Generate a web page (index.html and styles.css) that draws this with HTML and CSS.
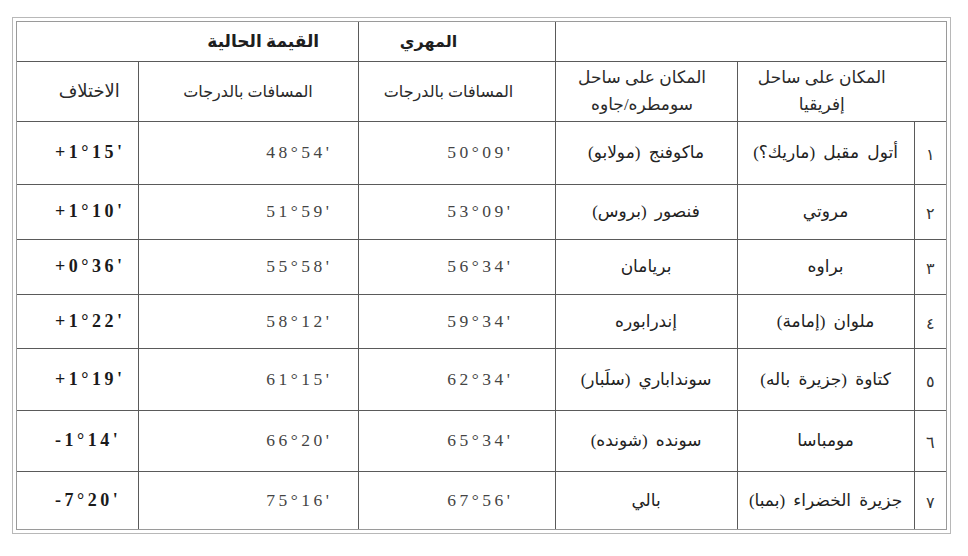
FILE: index.html
```html
<!DOCTYPE html>
<html lang="ar">
<head>
<meta charset="utf-8">
<title>جدول المسافات</title>
<link rel="stylesheet" href="styles.css">
</head>
<body>
<div class="frame">
  <div class="inner">
    <table class="grid" dir="rtl">
      <colgroup>
        <col class="c-num"><col class="c-af"><col class="c-su"><col class="c-mh"><col class="c-cur"><col class="c-diff">
      </colgroup>
      <thead>
        <tr class="h1">
          <th colspan="3"></th>
          <th class="title mahri">المهري</th>
          <th colspan="2" class="title current">القيمة الحالية</th>
        </tr>
        <tr class="h2">
          <th colspan="2" class="head two af-h">المكان على ساحل<br>إفريقيا</th>
          <th class="head two su-h">المكان على ساحل<br>سومطره/جاوه</th>
          <th class="head mh-h">المسافات بالدرجات</th>
          <th class="head cur-h">المسافات بالدرجات</th>
          <th class="head diff-h">الاختلاف</th>
        </tr>
      </thead>
      <tbody>
        <tr>
          <td class="no">١</td>
          <td class="place">أتول مقبل (ماريك؟)</td>
          <td class="place">ماكوفنج (مولابو)</td>
          <td class="deg mh">50°09'</td>
          <td class="deg cur">48°54'</td>
          <td class="diff">+1°15'</td>
        </tr>
        <tr>
          <td class="no">٢</td>
          <td class="place">مروتي</td>
          <td class="place">فنصور (بروس)</td>
          <td class="deg mh">53°09'</td>
          <td class="deg cur">51°59'</td>
          <td class="diff">+1°10'</td>
        </tr>
        <tr>
          <td class="no">٣</td>
          <td class="place">براوه</td>
          <td class="place">بريامان</td>
          <td class="deg mh">56°34'</td>
          <td class="deg cur">55°58'</td>
          <td class="diff">+0°36'</td>
        </tr>
        <tr>
          <td class="no">٤</td>
          <td class="place">ملوان (إمامة)</td>
          <td class="place">إندرابوره</td>
          <td class="deg mh">59°34'</td>
          <td class="deg cur">58°12'</td>
          <td class="diff">+1°22'</td>
        </tr>
        <tr>
          <td class="no">٥</td>
          <td class="place">كتاوة (جزيرة باله)</td>
          <td class="place">سونداباري (سلَبار)</td>
          <td class="deg mh">62°34'</td>
          <td class="deg cur">61°15'</td>
          <td class="diff">+1°19'</td>
        </tr>
        <tr>
          <td class="no">٦</td>
          <td class="place">مومباسا</td>
          <td class="place">سونده (شونده)</td>
          <td class="deg mh">65°34'</td>
          <td class="deg cur">66°20'</td>
          <td class="diff">-1°14'</td>
        </tr>
        <tr>
          <td class="no">٧</td>
          <td class="place">جزيرة الخضراء (بمبا)</td>
          <td class="place">بالي</td>
          <td class="deg mh">67°56'</td>
          <td class="deg cur">75°16'</td>
          <td class="diff">-7°20'</td>
        </tr>
      </tbody>
    </table>
  </div>
</div>
</body>
</html>
```

FILE: styles.css
```css
html, body {
  margin: 0;
  padding: 0;
  background: #ffffff;
}

body {
  font-family: "Liberation Serif", "DejaVu Sans", serif;
  color: #222;
}

.frame {
  margin: 17px 0 0 12px;
  width: fit-content;
  border: 1px solid #b8b8b8;
  padding: 3px;
}

.inner {
  border: 1px solid #9a9a9a;
}

.grid {
  border-collapse: collapse;
  border-style: hidden;
  table-layout: fixed;
  width: 929px;
}

.c-num { width: 32px; }
.c-af { width: 177px; }
.c-su { width: 182px; }
.c-mh { width: 197px; }
.c-cur { width: 220px; }
.c-diff { width: 121px; }

.grid th,
.grid td {
  border: 1px solid #5a5a5a;
  padding: 0;
  vertical-align: middle;
  text-align: center;
}

.grid th { font-weight: normal; }

.h1 { height: 39px; }
.h2 { height: 60px; }

.grid tbody tr:nth-child(1) { height: 63px; }
.grid tbody tr:nth-child(2) { height: 55px; }
.grid tbody tr:nth-child(3) { height: 55px; }
.grid tbody tr:nth-child(4) { height: 54px; }
.grid tbody tr:nth-child(5) { height: 62px; }
.grid tbody tr:nth-child(6) { height: 61px; }
.grid tbody tr:nth-child(7) { height: 58px; }

.grid .title {
  font-family: "Liberation Serif", "DejaVu Sans", serif;
  font-weight: bold;
  font-size: 17px;
  color: #1e1e1e;
}

.grid .mahri { padding-right: 56px; font-size: 16px; }
.grid .current { padding-left: 152px; }

.grid .head {
  font-family: "Liberation Serif", "DejaVu Sans", serif;
  font-size: 16px;
  line-height: 27px;
  color: #2a2a2a;
}

.grid .head.two { font-size: 17px; }

.grid .af-h { padding-right: 40px; }
.grid .su-h { padding-right: 8px; }
.grid .mh-h { padding-right: 16px; }
.grid .diff-h { padding-left: 24px; font-size: 18px; }

.grid .place {
  font-family: "Liberation Serif", "DejaVu Sans", serif;
  font-size: 17px;
  word-spacing: 4px;
  color: #222;
}

.grid .no {
  font-family: "Liberation Serif", "DejaVu Sans", serif;
  font-size: 16px;
  padding-top: 4px;
  color: #333;
}

.grid .deg {
  direction: ltr;
  text-align: right;
  font-family: "Liberation Serif", serif;
  font-size: 17.5px;
  letter-spacing: 3.5px;
  color: #444;
}

.grid .deg.mh { padding-right: 41px; }
.grid .deg.cur { padding-right: 25px; }

.grid .diff {
  direction: ltr;
  text-align: left;
  padding-left: 38px;
  font-family: "Liberation Serif", serif;
  font-weight: bold;
  font-size: 18px;
  letter-spacing: 3.5px;
  color: #1a1a1a;
}
```
